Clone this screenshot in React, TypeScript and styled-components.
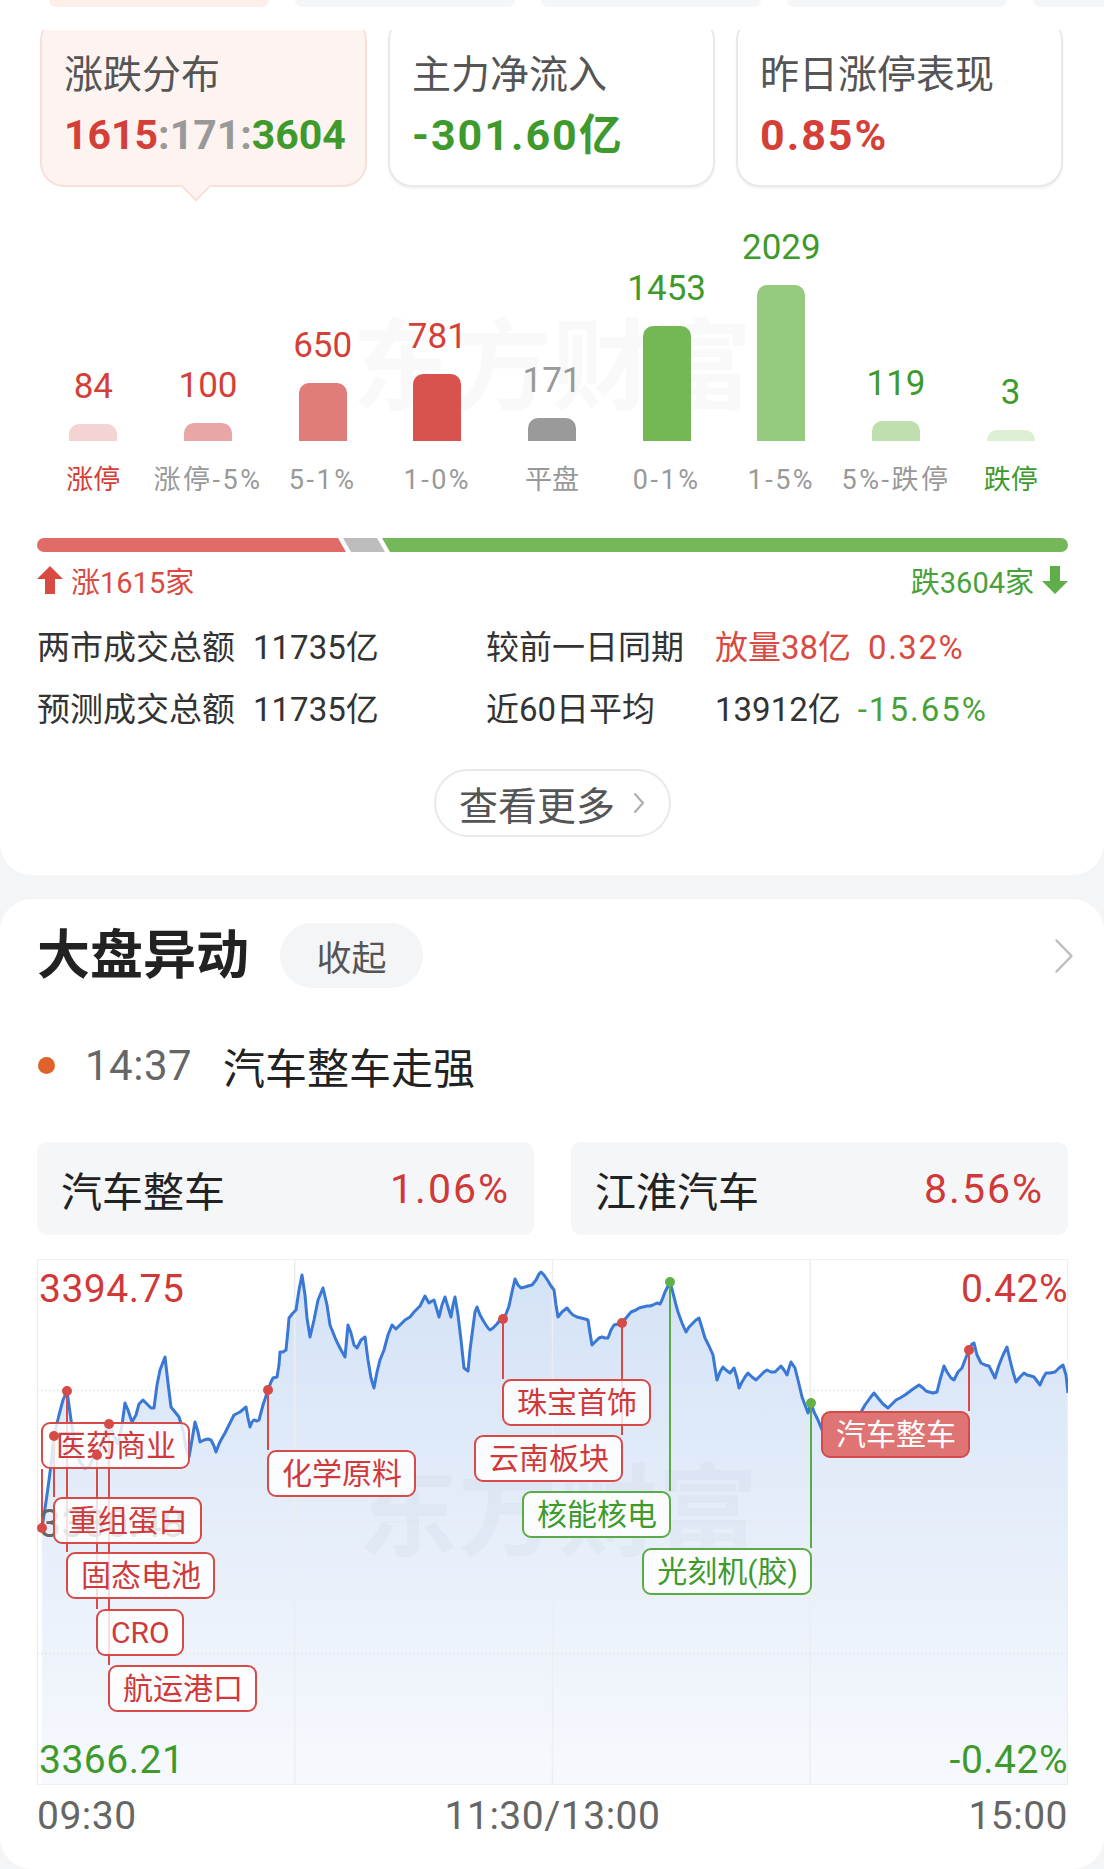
import React from 'react'
import styled, { createGlobalStyle } from 'styled-components'

const GlobalStyle = createGlobalStyle`
  html, body {
    margin: 0;
    padding: 0;
    background: #f4f5f7;
  }
  body {
    font-family: Roboto, "Noto Sans CJK SC", sans-serif;
    -webkit-font-smoothing: antialiased;
  }
`

const RED = '#d43f38'
const GREEN = '#3f9a2d'
const GRAY = '#999999'

/* ---------- data ---------- */

const BARS = [
    { value: 84, label: '涨停', color: '#f3d4d3', tone: RED, labelTone: RED },
    { value: 100, label: '涨停-5%', color: '#e8a7a6', tone: RED, labelTone: GRAY },
    { value: 650, label: '5-1%', color: '#e07d78', tone: RED, labelTone: GRAY },
    { value: 781, label: '1-0%', color: '#d9534e', tone: RED, labelTone: GRAY },
    { value: 171, label: '平盘', color: '#9a9a9a', tone: GRAY, labelTone: GRAY },
    { value: 1453, label: '0-1%', color: '#74b856', tone: GREEN, labelTone: GRAY },
    { value: 2029, label: '1-5%', color: '#96ca7f', tone: GREEN, labelTone: GRAY },
    { value: 119, label: '5%-跌停', color: '#bfe0ae', tone: GREEN, labelTone: GRAY },
    { value: 3, label: '跌停', color: '#dcefd3', tone: GREEN, labelTone: GREEN },
]

// chart frame in page coordinates
const FX = 37
const FY = 1259
const FW = 1031
const FH = 526

const LINE: [number, number][] = [
    [42, 1528], [47, 1495], [51, 1465], [54, 1436], [59, 1415], [63, 1400], [67, 1391], [71, 1420], [75, 1445],
    [80, 1462], [85, 1468], [89, 1467], [93, 1458], [97, 1455], [101, 1445], [105, 1432], [109, 1424], [114, 1436],
    [118, 1444], [122, 1425], [125, 1403], [128, 1410], [132, 1422], [136, 1415], [139, 1404], [143, 1400],
    [147, 1404], [151, 1408], [154, 1408], [157, 1385], [160, 1370], [165, 1357], [168, 1383], [171, 1407],
    [175, 1412], [179, 1417], [183, 1430], [186, 1448], [189, 1457], [192, 1440], [195, 1422], [198, 1432],
    [200, 1442], [204, 1440], [208, 1439], [211, 1440], [214, 1446], [216, 1452], [219, 1444], [221, 1440],
    [225, 1433], [229, 1425], [234, 1415], [240, 1412], [246, 1407], [248, 1418], [250, 1427], [252, 1422],
    [254, 1420], [257, 1421], [259, 1420], [263, 1405], [268, 1390], [271, 1382], [273, 1378], [277, 1377],
    [279, 1365], [280, 1352], [283, 1352], [286, 1350], [288, 1330], [289, 1318], [293, 1313], [296, 1310],
    [299, 1290], [302, 1275], [305, 1295], [307, 1318], [310, 1337], [314, 1320], [318, 1300], [323, 1288],
    [327, 1305], [330, 1325], [332, 1330], [336, 1340], [341, 1350], [345, 1357], [348, 1325], [351, 1333],
    [354, 1345], [357, 1348], [361, 1340], [365, 1337], [368, 1360], [371, 1378], [374, 1388], [377, 1372],
    [380, 1360], [384, 1350], [388, 1335], [392, 1325], [396, 1329], [400, 1325], [405, 1320], [410, 1317],
    [414, 1312], [416, 1310], [420, 1306], [423, 1300], [425, 1296], [429, 1303], [432, 1301], [434, 1300],
    [437, 1310], [439, 1317], [442, 1305], [445, 1297], [448, 1307], [451, 1317], [453, 1305], [455, 1297],
    [458, 1315], [461, 1340], [464, 1368], [468, 1371], [470, 1350], [473, 1327], [475, 1312], [477, 1307],
    [480, 1315], [484, 1322], [488, 1328], [490, 1330], [493, 1328], [497, 1324], [500, 1320], [503, 1319],
    [506, 1314], [509, 1306], [512, 1292], [515, 1279], [518, 1285], [521, 1288], [525, 1287], [528, 1286],
    [532, 1285], [536, 1280], [539, 1274], [541, 1272], [544, 1275], [548, 1281], [551, 1286], [554, 1290],
    [556, 1305], [558, 1317], [562, 1312], [567, 1308], [570, 1312], [573, 1315], [577, 1317], [581, 1318],
    [585, 1319], [588, 1320], [590, 1333], [592, 1345], [596, 1341], [599, 1338], [602, 1337], [605, 1338],
    [608, 1338], [611, 1330], [614, 1325], [618, 1324], [622, 1323], [626, 1318], [631, 1312], [636, 1310],
    [639, 1308], [643, 1307], [647, 1306], [650, 1306], [653, 1305], [657, 1303], [660, 1304], [662, 1300],
    [665, 1292], [668, 1286], [670, 1282], [673, 1293], [676, 1305], [678, 1312], [682, 1323], [686, 1332],
    [689, 1327], [693, 1323], [696, 1320], [699, 1318], [702, 1328], [705, 1338], [709, 1346], [713, 1355],
    [715, 1368], [717, 1380], [720, 1372], [723, 1367], [726, 1370], [730, 1373], [734, 1368], [737, 1378],
    [739, 1388], [742, 1382], [745, 1377], [748, 1373], [752, 1377], [756, 1380], [760, 1376], [764, 1372],
    [767, 1370], [771, 1372], [775, 1372], [778, 1369], [781, 1366], [784, 1370], [787, 1375], [789, 1368],
    [791, 1362], [793, 1365], [795, 1368], [798, 1380], [802, 1397], [805, 1405], [808, 1413], [811, 1403],
    [814, 1412], [818, 1420], [822, 1430], [826, 1440], [830, 1428], [834, 1418], [837, 1413], [840, 1425],
    [844, 1435], [847, 1440], [851, 1430], [856, 1420], [861, 1412], [865, 1405], [870, 1398], [874, 1393],
    [878, 1398], [883, 1404], [888, 1408], [892, 1404], [896, 1400], [900, 1398], [905, 1395], [909, 1392],
    [913, 1389], [916, 1387], [919, 1385], [923, 1388], [926, 1391], [929, 1392], [933, 1393], [937, 1392],
    [940, 1380], [944, 1366], [947, 1372], [951, 1378], [954, 1380], [958, 1372], [962, 1368], [965, 1360],
    [969, 1350], [972, 1344], [974, 1343], [977, 1355], [981, 1363], [985, 1365], [989, 1366], [992, 1372],
    [995, 1378], [999, 1365], [1003, 1355], [1007, 1347], [1010, 1360], [1013, 1372], [1016, 1382], [1020, 1377],
    [1024, 1373], [1027, 1375], [1031, 1376], [1034, 1377], [1037, 1381], [1040, 1385], [1043, 1378],
    [1046, 1373], [1050, 1373], [1055, 1372], [1059, 1368], [1063, 1365], [1066, 1375], [1068, 1393],
]

type Tone = 'red' | 'green' | 'solid'

const EVENTS: { name: string, x: number, y: number, top: number, side: 'left' | 'right', tone: Tone }[] = [
    { name: '医药商业', x: 42, y: 1528, top: 1422, side: 'left', tone: 'red' },
    { name: '重组蛋白', x: 54, y: 1436, top: 1497, side: 'left', tone: 'red' },
    { name: '固态电池', x: 67, y: 1391, top: 1552, side: 'left', tone: 'red' },
    { name: 'CRO', x: 97, y: 1455, top: 1609, side: 'left', tone: 'red' },
    { name: '航运港口', x: 109, y: 1424, top: 1665, side: 'left', tone: 'red' },
    { name: '化学原料', x: 268, y: 1390, top: 1450, side: 'left', tone: 'red' },
    { name: '珠宝首饰', x: 503, y: 1319, top: 1379, side: 'left', tone: 'red' },
    { name: '云南板块', x: 622, y: 1323, top: 1435, side: 'right', tone: 'red' },
    { name: '核能核电', x: 670, y: 1282, top: 1491, side: 'right', tone: 'green' },
    { name: '光刻机(胶)', x: 811, y: 1403, top: 1548, side: 'right', tone: 'green' },
    { name: '汽车整车', x: 969, y: 1350, top: 1411, side: 'right', tone: 'solid' },
]

const TAG_H = 47

/* ---------- overview card ---------- */

const Page = styled.div`
    width: 1104px;
    min-height: 1869px;
    background: #f4f5f7;
    overflow: hidden;
`

const OverviewCard = styled.section`
    height: 875px;
    box-sizing: border-box;
    background: #fff;
    border-radius: 0 0 32px 32px;
    display: flex;
    flex-direction: column;
`

const TabStrip = styled.div`
    display: flex;
    gap: 26px;
    padding-left: 49px;
    height: 7px;
    overflow: hidden;
`

const TabStub = styled.div<{ $active?: boolean }>`
    flex: 0 0 220px;
    height: 7px;
    border-radius: 0 0 10px 10px;
    background: ${ p => p.$active ? '#fdeee9' : '#f5f6f8' };
`

const SummaryClip = styled.div`
    margin-top: 23px;
    height: 175px;
    overflow: hidden;
`

const SummaryRow = styled.div`
    display: flex;
    gap: 21px;
    padding: 0 40px;
    margin-top: -14px;
`

const SummaryCard = styled.div<{ $active?: boolean }>`
    position: relative;
    flex: 0 0 327px;
    height: 171px;
    box-sizing: border-box;
    padding: 35px 0 0 22px;
    border-radius: 24px;
    border: 2px solid ${ p => p.$active ? '#f8e0d8' : '#e9e9e9' };
    background: ${ p => p.$active ? '#fdf4f1' : '#fff' };
    box-shadow: ${ p => p.$active ? 'none' : '0 2px 2px rgba(0,0,0,0.05)' };

    ${ p => p.$active && `
        &::after{
            content: '';
            position: absolute;
            left: 143px;
            bottom: -12px;
            width: 20px;
            height: 20px;
            background: #fdf4f1;
            border-right: 2px solid #f8e0d8;
            border-bottom: 2px solid #f8e0d8;
            transform: rotate(45deg);
        }
    ` }
`

const SummaryTitle = styled.div`
    font-size: 39px;
    line-height: 44px;
    color: #555;
`

const SummaryValue = styled.div<{ $color?: string, $wide?: boolean }>`
    margin-top: 14px;
    font-size: ${ p => p.$wide ? 43 : 41 }px;
    letter-spacing: ${ p => p.$wide ? 2 : 0 }px;
    line-height: 48px;
    font-weight: 700;
    color: ${ p => p.$color || '#333' };
    white-space: nowrap;
`

const Span = styled.span<{ $color: string, $spacing?: number }>`
    color: ${ p => p.$color };
    letter-spacing: ${ p => p.$spacing || 0 }px;
`

/* ---------- distribution bars ---------- */

const BarSection = styled.div`
    position: relative;
    height: 291px;
    padding: 0 36px;
    display: grid;
    grid-template-columns: repeat(9, 1fr);
    align-items: end;
`

const Watermark = styled.div<{ $color: string }>`
    position: absolute;
    font-size: 100px;
    line-height: 110px;
    font-weight: 700;
    color: ${ p => p.$color };
    white-space: nowrap;
    pointer-events: none;
`

const BarColumn = styled.div`
    position: relative;
    display: flex;
    flex-direction: column;
    align-items: center;
`

const BarValue = styled.div<{ $color: string }>`
    font-size: 35px;
    line-height: 36px;
    margin-bottom: 19px;
    color: ${ p => p.$color };
`

const Bar = styled.div<{ $color: string }>`
    width: 48px;
    border-radius: 10px 10px 0 0;
    background: ${ p => p.$color };
`

const BarLabel = styled.div<{ $color: string, $numeric: boolean }>`
    margin-top: 23px;
    font-size: 27px;
    line-height: 32px;
    letter-spacing: ${ p => p.$numeric ? 2.5 : 0 }px;
    color: ${ p => p.$color };
    white-space: nowrap;
`

const Ratio = styled.div`
    margin-top: 42px;
    padding: 0 36px 0 37px;
    svg{ display: block; }
`

const UpDownRow = styled.div`
    margin-top: 11px;
    padding: 0 36px 0 37px;
    display: flex;
    justify-content: space-between;
    align-items: center;
    height: 34px;
    font-size: 29px;
`

const UpDown = styled.div<{ $color: string }>`
    display: flex;
    align-items: center;
    gap: 8px;
    color: ${ p => p.$color };
`

const Stats = styled.div`
    margin-top: 31px;
    padding-left: 37px;
    display: grid;
    grid-template-columns: 216px 233px 229px 1fr;
    row-gap: 22px;
    font-size: 33px;
    line-height: 40px;
    color: #333;
    white-space: nowrap;
`

const StatPair = styled.div`
    display: flex;
    gap: 17px;
`

const MoreButton = styled.button`
    margin: 39px auto 0;
    width: 237px;
    height: 68px;
    box-sizing: border-box;
    border: 2px solid #e9e9e9;
    border-radius: 34px;
    background: #fff;
    display: flex;
    align-items: center;
    justify-content: center;
    gap: 18px;
    padding: 0;
    font-family: inherit;
    font-size: 39px;
    color: #555;
`

/* ---------- movement card ---------- */

const MoveCard = styled.section`
    margin-top: 24px;
    min-height: 970px;
    box-sizing: border-box;
    background: #fff;
    border-radius: 32px;
    padding: 24px 36px 33px 37px;
`

const Header = styled.div`
    display: flex;
    align-items: center;
    height: 65px;
`

const HeaderTitle = styled.h2`
    margin: 0;
    font-size: 53px;
    line-height: 62px;
    font-weight: 700;
    color: #222;
`

const CollapsePill = styled.div`
    margin-left: 31px;
    width: 143px;
    height: 65px;
    border-radius: 33px;
    background: #f4f5f7;
    display: flex;
    align-items: center;
    justify-content: center;
    font-size: 35px;
    color: #555;
`

const HeaderChevron = styled.div`
    margin-left: auto;
    margin-right: -6px;
    display: flex;
`

const EventRow = styled.div`
    margin-top: 52px;
    height: 50px;
    display: flex;
    align-items: center;
`

const EventDot = styled.span`
    width: 17px;
    height: 17px;
    border-radius: 50%;
    background: #e0622a;
    margin: 0 30px 0 1px;
`

const EventTime = styled.span`
    font-size: 42px;
    letter-spacing: 0.5px;
    color: #666;
    margin-right: 31px;
`

const EventText = styled.span`
    font-size: 42px;
    color: #222;
`

const StockGrid = styled.div`
    margin-top: 52px;
    display: grid;
    grid-template-columns: 1fr 1fr;
    gap: 37px;
`

const StockBox = styled.div`
    height: 93px;
    border-radius: 10px;
    background: #f5f6f8;
    display: flex;
    align-items: center;
    justify-content: space-between;
    padding: 0 24px 0 24px;
    font-size: 41px;
    color: #222;
`

const ChartFrame = styled.div`
    position: relative;
    margin-top: 24px;
    width: ${ FW }px;
    height: ${ FH }px;

    svg{
        position: absolute;
        left: 0;
        top: 0;
        display: block;
    }
`

const AxisPrice = styled.div<{ $color: string, $right?: boolean }>`
    position: absolute;
    ${ p => p.$right ? 'right: 0;' : 'left: 2px;' }
    font-size: 39px;
    line-height: 40px;
    letter-spacing: 0.5px;
    color: ${ p => p.$color };
`

const Tag = styled.div<{ $tone: Tone }>`
    position: absolute;
    height: ${ TAG_H }px;
    box-sizing: border-box;
    padding: 0 12px 0 13px;
    border: 2px solid ${ p => p.$tone === 'green' ? '#5aab45' : '#d64a48' };
    border-radius: 9px;
    background: ${ p => p.$tone === 'solid' ? '#de7473' : 'rgba(255,255,255,0.82)' };
    color: ${ p => p.$tone === 'green' ? '#3f9a2c' : p.$tone === 'solid' ? '#fff' : '#d0393a' };
    font-size: 30px;
    line-height: 43px;
    white-space: nowrap;
`

const TimeAxis = styled.div`
    margin-top: 11px;
    width: ${ FW }px;
    display: flex;
    justify-content: space-between;
    font-size: 39px;
    line-height: 40px;
    letter-spacing: 0.5px;
    color: #666;
`

/* ---------- pieces ---------- */

const ArrowIcon = ({ down, color }: { down?: boolean, color: string }) => (
    <svg width='26' height='28' viewBox='0 0 26 28' style={ down ? { transform: 'rotate(180deg)' } : undefined }>
        <path d='M13 0 L26 13 H18 V28 H8 V13 H0 Z' fill={ color } />
    </svg>
)

const Chevron = ({ w, h, color, sw }: { w: number, h: number, color: string, sw: number }) => (
    <svg width={ w } height={ h } viewBox={ `0 0 ${ w } ${ h }` }>
        <polyline points={ `${ sw },${ sw } ${ w - sw },${ h / 2 } ${ sw },${ h - sw }` } fill='none' stroke={ color } strokeWidth={ sw } strokeLinecap='round' strokeLinejoin='round' />
    </svg>
)

const RatioBar = () => {
    const w = 1031
    return (
        <svg width={ w } height='14' viewBox={ `0 0 ${ w } 14` }>
            <defs>
                <clipPath id='ratio-clip'>
                    <rect x='0' y='0' width={ w } height='14' rx='7' />
                </clipPath>
            </defs>
            <g clipPath='url(#ratio-clip)'>
                <polygon points='0,0 301,0 309,14 0,14' fill='#e06b67' />
                <polygon points='306,0 340,0 348,14 314,14' fill='#bdbdbd' />
                <polygon points={ `345,0 ${ w },0 ${ w },14 353,14` } fill='#74b85a' />
            </g>
        </svg>
    )
}

const IntradayChart = () => {
    const pts = LINE.map(([x, y]) => [x - FX, y - FY])
    const line = pts.map(([x, y], i) => `${ i ? 'L' : 'M' }${ x },${ y }`).join(' ')
    const area = `${ line } L${ pts[pts.length - 1][0] },${ FH } L${ pts[0][0] },${ FH } Z`

    return (
        <ChartFrame>
            <svg width={ FW } height={ FH } viewBox={ `0 0 ${ FW } ${ FH }` }>
                <defs>
                    <linearGradient id='area-fill' x1='0' y1='0' x2='0' y2={ FH } gradientUnits='userSpaceOnUse'>
                        <stop offset='0' stopColor='#d3e2f6' />
                        <stop offset='1' stopColor='#f7f9fd' />
                    </linearGradient>
                </defs>
                <path d={ area } fill='url(#area-fill)' />
                <rect x='0.5' y='0.5' width={ FW - 1 } height={ FH - 1 } fill='none' stroke='#eceef2' />
                { [1, 2, 3].map(i => (
                    <line key={ 'v' + i } x1={ FW * i / 4 } y1='0' x2={ FW * i / 4 } y2={ FH } stroke='#eceef2' strokeWidth='1.5' />
                )) }
                { [1, 2, 3].map(i => (
                    <line key={ 'h' + i } x1='0' y1={ FH * i / 4 } x2={ FW } y2={ FH * i / 4 } stroke='#e4e7ec' strokeWidth='1.5' strokeDasharray='2 2' />
                )) }
                <path d={ line } fill='none' stroke='#3a78d6' strokeWidth='3' strokeLinejoin='round' />
                { EVENTS.map(e => {
                    const y2 = e.top > e.y ? e.top : e.top + TAG_H
                    return (
                        <line key={ e.name } x1={ e.x - FX } y1={ e.y - FY } x2={ e.x - FX } y2={ y2 - FY }
                            stroke={ e.tone === 'green' ? '#5aab45' : '#d64a48' } strokeWidth='2' />
                    )
                }) }
            </svg>

            <Watermark $color='rgba(150,160,180,0.07)' style={ { left: 321, top: 200 } }>东方财富</Watermark>

            <AxisPrice $color='#d0393a' style={ { top: 10 } }>3394.75</AxisPrice>
            <AxisPrice $color='#d0393a' $right style={ { top: 10 } }>0.42%</AxisPrice>
            <AxisPrice $color='#666' style={ { top: 245 } }>3380.48</AxisPrice>
            <AxisPrice $color='#3f9a2d' style={ { top: 481 } }>3366.21</AxisPrice>
            <AxisPrice $color='#3f9a2d' $right style={ { top: 481 } }>-0.42%</AxisPrice>

            { EVENTS.map(e => (
                <Tag key={ e.name } $tone={ e.tone }
                    style={ e.side === 'left'
                        ? { left: e.x - FX - 1, top: e.top - FY }
                        : { right: FW - (e.x - FX) - 1, top: e.top - FY } }>
                    { e.name }
                </Tag>
            )) }

            <svg width={ FW } height={ FH } viewBox={ `0 0 ${ FW } ${ FH }` } style={ { pointerEvents: 'none' } }>
                { EVENTS.map(e => (
                    <circle key={ e.name } cx={ e.x - FX } cy={ e.y - FY } r='5'
                        fill={ e.tone === 'green' ? '#62b04a' : '#d64a48' } />
                )) }
            </svg>
        </ChartFrame>
    )
}

const App = () => {
    return (
        <Page>
            <GlobalStyle />

            <OverviewCard>
                <TabStrip>
                    <TabStub $active />
                    <TabStub />
                    <TabStub />
                    <TabStub />
                    <TabStub />
                </TabStrip>

                <SummaryClip>
                    <SummaryRow>
                        <SummaryCard $active>
                            <SummaryTitle>涨跌分布</SummaryTitle>
                            <SummaryValue>
                                <Span $color={ RED }>1615</Span>
                                <Span $color={ GRAY }>:171:</Span>
                                <Span $color={ GREEN }>3604</Span>
                            </SummaryValue>
                        </SummaryCard>
                        <SummaryCard>
                            <SummaryTitle>主力净流入</SummaryTitle>
                            <SummaryValue $color={ GREEN } $wide>-301.60亿</SummaryValue>
                        </SummaryCard>
                        <SummaryCard>
                            <SummaryTitle>昨日涨停表现</SummaryTitle>
                            <SummaryValue $color={ RED } $wide>0.85%</SummaryValue>
                        </SummaryCard>
                    </SummaryRow>
                </SummaryClip>

                <BarSection>
                    <Watermark $color='rgba(0,0,0,0.025)' style={ { left: 352, top: 108 } }>东方财富</Watermark>
                    { BARS.map(b => (
                        <BarColumn key={ b.label }>
                            <BarValue $color={ b.tone }>{ b.value }</BarValue>
                            <Bar $color={ b.color } style={ { height: 11 + b.value * 0.0716 } } />
                            <BarLabel $color={ b.labelTone } $numeric={ /\d/.test(b.label) }>{ b.label }</BarLabel>
                        </BarColumn>
                    )) }
                </BarSection>

                <Ratio>
                    <RatioBar />
                </Ratio>

                <UpDownRow>
                    <UpDown $color='#d94a43'>
                        <ArrowIcon color='#d94a43' />
                        涨1615家
                    </UpDown>
                    <UpDown $color='#4aa13a'>
                        跌3604家
                        <ArrowIcon down color='#5fae49' />
                    </UpDown>
                </UpDownRow>

                <Stats>
                    <div>两市成交总额</div>
                    <div>11735亿</div>
                    <div>较前一日同期</div>
                    <StatPair>
                        <Span $color='#d94a43'>放量38亿</Span>
                        <Span $color='#d94a43' $spacing={ 1.5 }>0.32%</Span>
                    </StatPair>
                    <div>预测成交总额</div>
                    <div>11735亿</div>
                    <div>近60日平均</div>
                    <StatPair>
                        <span>13912亿</span>
                        <Span $color='#4aa13a' $spacing={ 2 }>-15.65%</Span>
                    </StatPair>
                </Stats>

                <MoreButton>
                    查看更多
                    <Chevron w={ 12 } h={ 22 } color='#aaa' sw={ 2 } />
                </MoreButton>
            </OverviewCard>

            <MoveCard>
                <Header>
                    <HeaderTitle>大盘异动</HeaderTitle>
                    <CollapsePill>收起</CollapsePill>
                    <HeaderChevron>
                        <Chevron w={ 20 } h={ 36 } color='#bdbdbd' sw={ 2.5 } />
                    </HeaderChevron>
                </Header>

                <EventRow>
                    <EventDot />
                    <EventTime>14:37</EventTime>
                    <EventText>汽车整车走强</EventText>
                </EventRow>

                <StockGrid>
                    <StockBox>
                        <span>汽车整车</span>
                        <Span $color='#d0393a' $spacing={ 2 }>1.06%</Span>
                    </StockBox>
                    <StockBox>
                        <span>江淮汽车</span>
                        <Span $color='#d0393a' $spacing={ 2 }>8.56%</Span>
                    </StockBox>
                </StockGrid>

                <IntradayChart />

                <TimeAxis>
                    <span>09:30</span>
                    <span>11:30/13:00</span>
                    <span>15:00</span>
                </TimeAxis>
            </MoveCard>
        </Page>
    )
}

export default App
